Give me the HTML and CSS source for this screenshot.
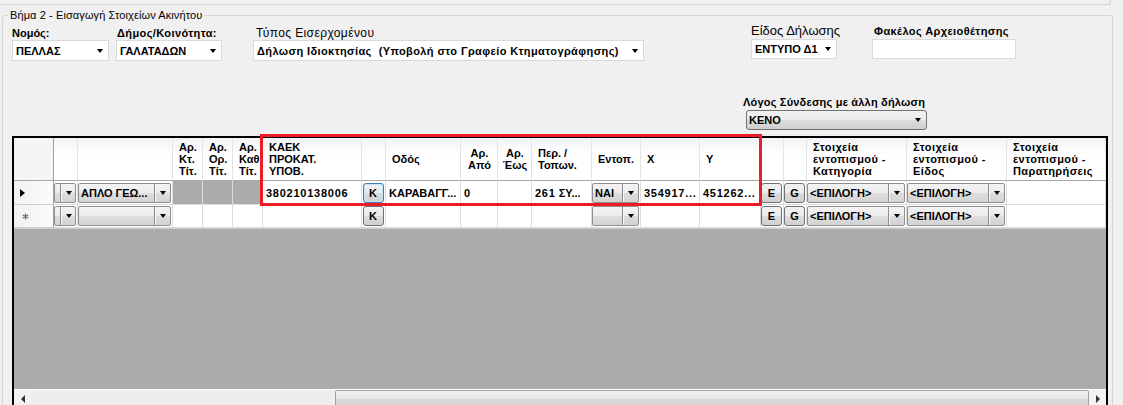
FILE: index.html
```html
<!DOCTYPE html>
<html lang="el">
<head>
<meta charset="utf-8">
<title>Βήμα 2</title>
<link rel="stylesheet" href="styles.css">
</head>
<body>
<div class="prev"></div>
<fieldset class="group">
  <legend>Βήμα 2 - Εισαγωγή Στοιχείων Ακινήτου</legend>
  <div class="content">
    <div class="fields">
      <div class="field f-nomos">
        <div class="lbl b">Νομός:</div>
        <div class="combo white h21"><span class="val">ΠΕΛΛΑΣ</span><span class="arr"></span></div>
      </div>
      <div class="field f-dimos">
        <div class="lbl b ls">Δήμος/Κοινότητα:</div>
        <div class="combo white h21"><span class="val">ΓΑΛΑΤΑΔΩΝ</span><span class="arr"></span></div>
      </div>
      <div class="field f-typos">
        <div class="lbl l12">Τύπος Εισερχομένου</div>
        <div class="combo white h21"><span class="val ls">Δήλωση Ιδιοκτησίας&nbsp; (Υποβολή στο Γραφείο Κτηματογράφησης)</span><span class="arr"></span></div>
      </div>
      <div class="field f-eidos">
        <div class="lbl l13">Είδος Δήλωσης</div>
        <div class="combo white h20"><span class="val">ΕΝΤΥΠΟ Δ1</span><span class="arr"></span></div>
      </div>
      <div class="field f-fakelos">
        <div class="lbl b ls">Φακέλος Αρχειοθέτησης</div>
        <div class="textbox"></div>
      </div>
    </div>
    <div class="field f-logos">
      <div class="lbl b ls2">Λόγος Σύνδεσης με άλλη δήλωση</div>
      <div class="combo std"><span class="val">ΚΕΝΟ</span><span class="arr"></span></div>
    </div>

    <div class="grid">
      <div class="table">
        <div class="hc rh"></div>
        <div class="hc"></div>
        <div class="hc"></div>
        <div class="hc"><span>Αρ.<br>Κτ.<br>Τίτ.</span></div>
        <div class="hc"><span>Αρ.<br>Ορ.<br>Τίτ.</span></div>
        <div class="hc"><span>Αρ.<br>Καθ.<br>Τίτ.</span></div>
        <div class="hc"><span>ΚΑΕΚ<br>ΠΡΟΚΑΤ.<br>ΥΠΟΒ.</span></div>
        <div class="hc"></div>
        <div class="hc"><span>Οδός</span></div>
        <div class="hc mid"><span>Αρ.<br>Από</span></div>
        <div class="hc mid"><span>Αρ.<br>Έως</span></div>
        <div class="hc"><span>Περ. /<br>Τοπων.</span></div>
        <div class="hc"><span>Εντοπ.</span></div>
        <div class="hc"><span>X</span></div>
        <div class="hc"><span>Y</span></div>
        <div class="hc"></div>
        <div class="hc"></div>
        <div class="hc ls"><span>Στοιχεία<br>εντοπισμού -<br>Κατηγορία</span></div>
        <div class="hc ls"><span>Στοιχεία<br>εντοπισμού -<br>Είδος</span></div>
        <div class="hc ls"><span>Στοιχεία<br>εντοπισμού -<br>Παρατηρήσεις</span></div>

        <div class="c rh"><span class="cur"></span></div>
        <div class="c cb"><div class="gcombo mini"><span class="val"></span><span class="btn"><span class="arr"></span></span></div></div>
        <div class="c cb"><div class="gcombo"><span class="val">ΑΠΛΟ ΓΕΩ...</span><span class="btn"><span class="arr"></span></span></div></div>
        <div class="c ro"></div>
        <div class="c ro"></div>
        <div class="c ro"></div>
        <div class="c t"><span class="num">380210138006</span></div>
        <div class="c bt"><div class="gbtn focus">K</div></div>
        <div class="c t">ΚΑΡΑΒΑΓΓ...</div>
        <div class="c t">0</div>
        <div class="c t"></div>
        <div class="c t"><span class="num">261</span>&nbsp;ΣΥ...</div>
        <div class="c cb"><div class="gcombo"><span class="val">ΝΑΙ</span><span class="btn"><span class="arr"></span></span></div></div>
        <div class="c t"><span class="num">354917...</span></div>
        <div class="c t"><span class="num">451262...</span></div>
        <div class="c bt"><div class="gbtn">E</div></div>
        <div class="c bt"><div class="gbtn">G</div></div>
        <div class="c cb"><div class="gcombo"><span class="val">&lt;ΕΠΙΛΟΓΗ&gt;</span><span class="btn"><span class="arr"></span></span></div></div>
        <div class="c cb"><div class="gcombo"><span class="val">&lt;ΕΠΙΛΟΓΗ&gt;</span><span class="btn"><span class="arr"></span></span></div></div>
        <div class="c"></div>

        <div class="c rh"><svg class="star" width="7" height="7" viewBox="0 0 7 7"><path d="M3.5 0.5v6M0.8 2l5.4 3M0.8 5l5.4-3" stroke="#6a6a6a" stroke-width="1.2"/></svg></div>
        <div class="c cb"><div class="gcombo mini"><span class="val"></span><span class="btn"><span class="arr"></span></span></div></div>
        <div class="c cb"><div class="gcombo"><span class="val"></span><span class="btn"><span class="arr"></span></span></div></div>
        <div class="c"></div>
        <div class="c"></div>
        <div class="c"></div>
        <div class="c t"></div>
        <div class="c bt"><div class="gbtn">K</div></div>
        <div class="c t"></div>
        <div class="c t"></div>
        <div class="c t"></div>
        <div class="c t"></div>
        <div class="c cb"><div class="gcombo"><span class="val"></span><span class="btn"><span class="arr"></span></span></div></div>
        <div class="c t"></div>
        <div class="c t"></div>
        <div class="c bt"><div class="gbtn">E</div></div>
        <div class="c bt"><div class="gbtn">G</div></div>
        <div class="c cb"><div class="gcombo"><span class="val">&lt;ΕΠΙΛΟΓΗ&gt;</span><span class="btn"><span class="arr"></span></span></div></div>
        <div class="c cb"><div class="gcombo"><span class="val">&lt;ΕΠΙΛΟΓΗ&gt;</span><span class="btn"><span class="arr"></span></span></div></div>
        <div class="c"></div>
      </div>
      <div class="empty"></div>
      <div class="hscroll">
        <div class="sbtn"><span class="larr"></span></div>
        <div class="track"><div class="thumb"></div></div>
        <div class="sbtn"><span class="rarr"></span></div>
      </div>
      <div class="highlight"></div>
    </div>
  </div>
</fieldset>
</body>
</html>
```
FILE: styles.css
```css
* { box-sizing: border-box; }
html, body { margin: 0; padding: 0; }
body {
  width: 1123px;
  height: 405px;
  overflow: hidden;
  background: #f0f0f0;
  font-family: "Liberation Sans", Arial, sans-serif;
  font-size: 11px;
  color: #000;
}

.ls { letter-spacing: 0.4px; }
.ls2 { letter-spacing: 0.2px; }
.num { letter-spacing: 0.75px; }

.prev {
  width: 1111px;
  height: 5px;
  border-bottom: 1px solid #d5d5d5;
  border-right: 1px solid #d5d5d5;
  border-bottom-right-radius: 3px;
}

.group {
  margin: 3px 0 0 2px;
  padding: 0;
  width: 1111px;
  height: 430px;
  min-width: 0;
  border: 1px solid #d5d5d5;
  border-radius: 3px;
}
.group legend {
  margin-left: 5px;
  padding: 0 2px;
  line-height: 14px;
  font-size: 11px;
  letter-spacing: 0.1px;
}

.content { padding-left: 9px; }

.fields {
  display: flex;
  align-items: flex-start;
  margin-top: 4px;
}
.field { display: flex; flex-direction: column; }
.lbl { line-height: 14px; white-space: nowrap; }
.lbl.b { font-weight: bold; }
.lbl.l12 { font-size: 12px; letter-spacing: 0.4px; }
.lbl.l13 { font-size: 13px; line-height: 16px; }

.f-nomos { width: 97px; }
.f-dimos { width: 106px; margin-left: 7px; }
.f-dimos .lbl { padding-left: 1px; }
.f-typos { width: 391px; margin-left: 31px; }
.f-typos .lbl { padding-left: 3px; }
.f-eidos { width: 86px; margin-left: 107px; margin-top: -3px; }
.f-fakelos { width: 144px; margin-left: 35px; margin-top: -2px; }
.f-fakelos .lbl { padding-left: 2px; line-height: 15px; }

.f-logos { margin: 34px 0 0 731px; width: 184px; }
.f-logos .combo { margin: 1px 0 0 3px; width: 181px; }

.combo {
  display: flex;
  align-items: center;
  font-weight: bold;
  white-space: nowrap;
}
.combo .val { flex: 1; overflow: hidden; padding-left: 3px; }
.combo .arr { margin-right: 5px; }
.combo.white { background: #fff; border: 1px solid #dadada; }
.combo.h21 { height: 21px; }
.combo.h20 { height: 20px; }
.combo.std {
  height: 20px;
  border: 1px solid #707070;
  border-radius: 3px;
  background: linear-gradient(#f2f2f2, #ebebeb 50%, #dddddd 50%, #cfcfcf);
}
.combo.std .val { padding-left: 2px; }

.textbox {
  height: 20px;
  background: #fff;
  border: 1px solid #dadada;
}

.arr {
  width: 0;
  height: 0;
  border-top: 4px solid #000;
  border-left: 3.5px solid transparent;
  border-right: 3.5px solid transparent;
}

/* grid */
.grid {
  position: relative;
  margin-top: 6px;
  width: 1096px;
  border: 2px solid #000;
  border-bottom: 0;
  background: #ababab;
}
.table {
  display: grid;
  grid-template-columns: 40px 24px 95px 30px 30px 30px 99px 24px 75px 37px 34px 60px 49px 59px 61px 23px 23px 100px 100px 1fr;
  grid-template-rows: 43px 24px 23px;
}
.hc {
  display: flex;
  align-items: center;
  padding: 0 2px 0 6px;
  background: linear-gradient(#f2f3f5, #ffffff 40%);
  border-right: 1px solid #e4e4e4;
  border-bottom: 1px solid #a8a8a8;
  font-weight: bold;
  line-height: 12px;
  white-space: nowrap;
  overflow: hidden;
}
.hc.mid { justify-content: center; text-align: center; padding: 0 0 0 1px; }
.hc.rh { background: #f4f5f7; border-right-color: #a0a0a0; }

.c {
  display: flex;
  align-items: center;
  background: #fff;
  border-right: 1px solid #dcdcdc;
  border-bottom: 1px solid #dcdcdc;
  font-weight: bold;
  white-space: nowrap;
  overflow: hidden;
}
.c.t { padding-left: 3px; }
.c.ro { background: #ababab; }
.c.rh {
  background: linear-gradient(90deg, #f1f2f4, #fbfbfc);
  border-right-color: #a0a0a0;
  border-bottom-color: #cfcfcf;
}
.cur {
  margin-left: 6px;
  width: 0;
  height: 0;
  border-left: 5px solid #000;
  border-top: 4px solid transparent;
  border-bottom: 4px solid transparent;
}
.star { margin-left: 8px; }

.c.cb { padding: 0 1px 0 0; }
.c.bt { justify-content: center; padding-right: 1px; }

.gcombo {
  display: flex;
  width: 100%;
  height: 20px;
  border: 1px solid #8e8e8e;
  border-radius: 2px;
  background: linear-gradient(#f4f4f4, #ebebeb 50%, #dedede 50%, #d3d3d3);
}
.gcombo .val {
  flex: 1;
  min-width: 0;
  overflow: hidden;
  padding-left: 2px;
  line-height: 18px;
}
.gcombo .btn {
  width: 16px;
  flex: none;
  display: flex;
  align-items: center;
  justify-content: center;
  border-left: 1px solid #8e8e8e;
  box-shadow: inset 1px 0 0 #f7f7f7;
}
.gcombo.mini .val { flex: 0 0 5px; padding: 0; }

.gbtn {
  width: 21px;
  height: 20px;
  display: flex;
  align-items: center;
  justify-content: center;
  border: 1px solid #707070;
  border-radius: 3px;
  background: linear-gradient(#f2f2f2, #ebebeb 50%, #dddddd 50%, #cfcfcf);
  font-weight: bold;
}
.gbtn.focus { border-color: #3c7fb1; box-shadow: inset 0 0 0 1px #c4e5f6; }

.empty { height: 161px; background: #ababab; border-top: 1px solid #cfcfcf; }

.hscroll {
  display: flex;
  height: 18px;
  border-top: 1px solid #fdfdfd;
  background: #eeeeee;
}
.sbtn {
  width: 17px;
  display: flex;
  align-items: center;
  justify-content: center;
  background: #f2f2f2;
}
.track { flex: 1; padding-left: 304px; }
.thumb {
  height: 17px;
  border: 1px solid #a0a0a0;
  border-radius: 2px;
  background: linear-gradient(#f3f3f3, #e6e6e6 50%, #d9d9d9 50%, #d2d2d2);
}
.larr {
  width: 0; height: 0;
  border-right: 4px solid #333;
  border-top: 4px solid transparent;
  border-bottom: 4px solid transparent;
}
.rarr {
  width: 0; height: 0;
  border-left: 4px solid #333;
  border-top: 4px solid transparent;
  border-bottom: 4px solid transparent;
}

.highlight {
  position: absolute;
  left: 246px;
  top: -4px;
  width: 502px;
  height: 72px;
  border: 3px solid #ed1c24;
  pointer-events: none;
}
```
